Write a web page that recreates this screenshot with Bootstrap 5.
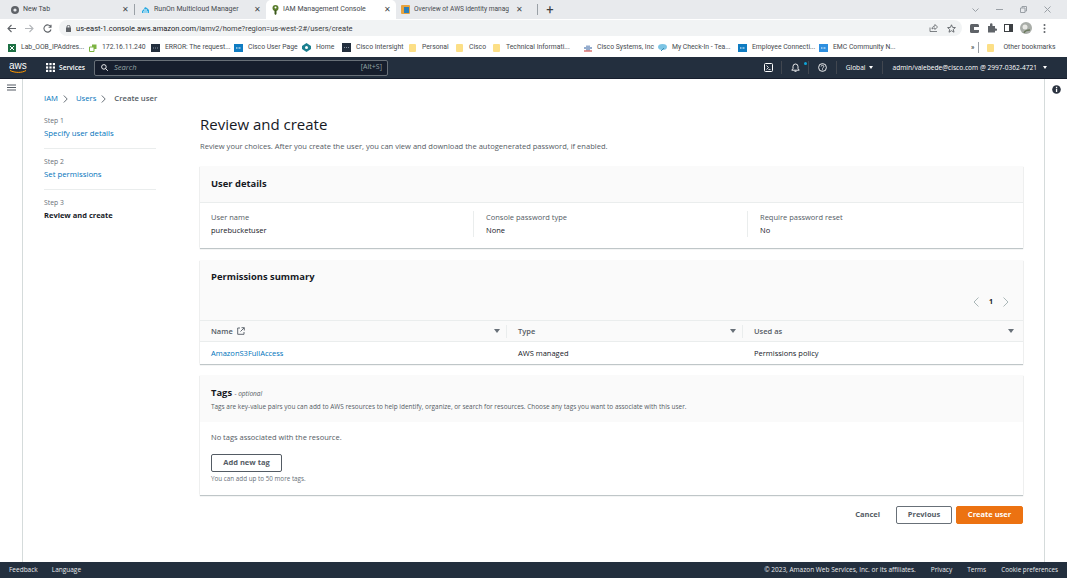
<!DOCTYPE html>
<html lang="en"><head><meta charset="utf-8"><title>IAM Management Console</title>
<link href="https://cdn.jsdelivr.net/npm/bootstrap@5.3.0/dist/css/bootstrap.min.css" rel="stylesheet">
<style>
html,body{height:100%;margin:0;overflow:hidden}
body{width:1067px;height:578px;font-family:"Open Sans","Noto Sans",sans-serif;font-size:7.5px;color:#16191f;background:#fff;line-height:1.2}
a{text-decoration:none;color:#0073bb}
svg{display:block;flex:none}
.tabstrip{height:19px;background:#e8eaed;color:#45494e;font-size:7px;font-family:Roboto,sans-serif}
.ctab{height:19px;gap:4px;flex:none}
.ctab .tname{flex:1;white-space:nowrap;overflow:hidden}
.ctab .tx{font-size:8px;color:#45494e}
.t1{width:134px;padding:0 5px 0 11px}.t2{width:131px;padding:0 5px 0 6px}.t3{width:130px;padding:0 5px 0 6px;background:#fff;border-radius:5px 5px 0 0}.t4{width:141px;padding:0 14px 0 5px}
.t4 .tname{font-size:6.6px}
.tsep{width:1px;height:11px;background:#9aa0a6;flex:none}
.plus{font-size:13px;margin-left:6px;width:12px;color:#3c4043}
.wctl{gap:17px;padding-right:16px;color:#9aa0a6}
.addr{height:18px;background:#fff;padding-left:7px;gap:9px}
.pill{width:903px;height:16px;background:#f1f3f4;border-radius:8px;padding:0 6px 0 7px;font-size:7.5px;color:#3c4043;gap:5px;margin-left:-2px;font-family:Roboto,sans-serif}
.pill b{font-weight:400;color:#202124}
.addr-r{gap:7px;margin-left:-1px}
.bmarks{height:20px;background:#fff;font-size:6.8px;color:#45494e;padding:1px 0 0 8px;white-space:nowrap;font-family:Roboto,sans-serif}
.bm{gap:5px;flex:none}
.b1{width:81px}.b2{width:62px}.b3{width:83px}.b4{width:68px}.b5{width:40px}.b6{width:67px}.b7{width:47px}.b8{width:37px}.b9{width:91px}.b10{width:74px}.b11{width:80px}.b12{width:81px}.b13{width:152px}
.bf{gap:6px}
.awsnav{height:22px;background:#232f3e;color:#fff;border-bottom:1px solid #161e2d;font-size:6.6px;font-weight:500;padding:0 20px 0 9px}
.awslogo{width:20px;margin-right:17px;font-weight:400;font-size:10px;line-height:8px;font-family:"Liberation Sans",sans-serif}
.svc{gap:4px;margin-right:9px;font-weight:600}
.sbox{width:294px;height:16px;background:#161e2d;border:1px solid #687078;border-radius:2px;padding:0 5px 0 6px;color:#95a5a6;font-weight:400}
.sbox i{margin-left:6px;margin-right:auto;font-size:7.6px}
.sbox span{font-size:7px}
.navr{margin-left:auto;gap:0}
.navcell{padding:0 9px;height:13px;gap:4px;border-left:1px solid #414750}
.navcell.first{border-left:0;padding-right:8px}
.navcell.bellc{padding-right:8px}
.caret{width:0;height:0;border-left:2.500px solid transparent;border-right:2.500px solid transparent;border-top:3px solid #fff;margin-left:2px}
.navcell.globc .caret{margin-left:0}
.dotb{width:3px;height:3px;border-radius:50%;background:#0ea5d9;margin:-8px -7px 0 0}
.mainwrap{height:483px}
.rail{width:23px;border-right:1px solid #d5dbdb;flex:none;padding:5px 0 0 7px}
.railr{width:23px;border-left:1px solid #d5dbdb;flex:none;padding:6px 0 0 7px}
.content{flex:1;padding:0 21px 0 21px;min-width:0}
.crumb{height:12px;margin-top:14px;margin-bottom:3px;gap:5px;font-size:7.7px;color:#545b64}
.crumb svg{margin-right:3px}
.crumb span{font-weight:600}
.wiz{width:112px;flex:none;margin-right:44px}
.wstep{height:41px;padding-top:7px;border-bottom:1px solid #eaeded}
.wstep:last-child{border-bottom:0}
.wlabel{font-size:6.8px;color:#687078;height:12px;line-height:12px}
.wlink{font-size:7.8px;height:13px;line-height:13px}
.wcur{font-weight:700;color:#16191f;font-size:7.5px}
.maincol{flex:1;min-width:0;margin-top:5px}
.ptitle{font-size:15px;font-weight:400;margin:0;line-height:22px;height:22px}
.pdesc{font-size:7.55px;color:#545b64;margin:5px 0 14px;line-height:12px;height:12px}
.pcard{border:0;border-radius:0;background:#fff;box-shadow:0 1px 1px 0 rgba(0,28,36,.25),1px 0 1px -1px rgba(0,28,36,.14),-1px 0 1px -1px rgba(0,28,36,.14)}
.phead{background:#fafafa;border:0;border-radius:0;padding:0 11px}
.h1c{height:37px;border-bottom:1px solid #eaeded;display:flex;align-items:center}
.ctitle{font-size:9.4px;font-weight:700;margin:0}
.ud{height:45px;padding:8px 0 0 11px}
.udc{flex:none;height:26px}
.ua{width:262px}
.ub{width:274px;padding-left:12px;border-left:1px solid #eaeded}
.uc{width:262px;padding-left:12px;border-left:1px solid #eaeded}
.udl{font-size:7.5px;color:#545b64;line-height:13px}
.udv{font-size:7.5px;line-height:13px;color:#16191f}
.mt12{margin-top:12px}
.mt11{margin-top:11px}
.permh{height:60px;padding-top:11px}
.pager{gap:10px;justify-content:flex-end;height:14px;margin-top:13px;padding-right:3px;font-weight:700;font-size:7px}
.ptable{table-layout:fixed;width:100%;margin:0;border-collapse:separate;border-spacing:0}
.ptable th,.ptable td{padding:0;border:0;font-size:7.5px;vertical-align:middle}
.ptable th{height:22px;background:#fafafa;border-top:1px solid #eaeded;border-bottom:1px solid #eaeded;color:#545b64;font-weight:600;padding-left:11px}
.ptable td{height:22px;padding-left:11px;background:#fff;color:#16191f}
.c1{width:307px}.c2{width:236px}
.thwrap{height:13px;padding-right:9px}
.thwrap.sep{border-right:1px solid #eaeded;padding-right:6px}
.tri{width:0;height:0;border-left:3px solid transparent;border-right:3px solid transparent;border-top:4px solid #687078;margin-left:auto}
.tagh{height:47px;padding-top:12px}
.opt{font-weight:400;font-style:italic;font-size:6.5px;color:#545b64}
.tagd{font-size:6.45px;color:#545b64;margin-top:4px;line-height:9px;white-space:nowrap}
.tagb{height:73px;padding:9px 11px 0}
.not{font-size:7.5px;color:#545b64;line-height:13px}
.addbtn{width:71px;height:18px;margin-top:10px;padding:0;border:1px solid #545b64;border-radius:2px;background:#fff;color:#545b64;font-weight:700;font-size:7.5px;line-height:1}
.hint{font-size:6.3px;color:#687078;margin-top:2px;line-height:9px}
.acts{margin-top:11px;gap:4px;height:18px}
.cancel{color:#545b64;font-weight:700;font-size:7.5px;margin-right:12px;padding:0;border:0;background:none;line-height:1}
.prevb{width:56px;height:18px;padding:0;border:1px solid #687078;border-radius:2px;background:#fff;color:#545b64;font-weight:700;font-size:7.5px;line-height:1}
.createb{width:67px;height:18px;padding:0;border:1px solid #ec7211;border-radius:2px;background:#ec7211;color:#fff;font-weight:700;font-size:7.5px;line-height:1}
.foot{height:16px;background:#232f3e;color:#e8eaed;font-size:6.5px;padding:0 9px;font-weight:500}
.foot .fl{gap:14px}
.foot .fr{margin-left:auto;gap:15px}
.foot .ck{font-size:6.3px}
</style></head><body>

<div class="tabstrip d-flex align-items-center">
  <div class="ctab t1 d-flex align-items-center"><svg width="8" height="8" viewBox="0 0 8 8"><circle cx="4" cy="4" r="4" fill="#5f6368"/><circle cx="4" cy="4" r="1.6" fill="#e8eaed"/></svg><span class="tname">New Tab</span><span class="tx">✕</span></div>
  <div class="tsep"></div>
  <div class="ctab t2 d-flex align-items-center"><svg width="9" height="8" viewBox="0 0 9 8"><path d="M1 7h7V4L6 2 4 1 3 3 1 5z" fill="#29a8e0"/><path d="M2 6h5M3 4h3" stroke="#fff"/></svg><span class="tname">RunOn Multicloud Manager</span><span class="tx">✕</span></div>
  <div class="ctab t3 d-flex align-items-center"><svg width="7" height="10" viewBox="0 0 7 10"><circle cx="3.500" cy="3" r="3" fill="#5a7d2c"/><path d="M2.500 5h2v4l-1 1-1-1z" fill="#3c5a1d"/><circle cx="3.500" cy="2.400" r="1" fill="#fff"/></svg><span class="tname">IAM Management Console</span><span class="tx">✕</span></div>
  <div class="ctab t4 d-flex align-items-center"><svg width="9" height="9" viewBox="0 0 9 9"><rect width="9" height="9" rx="1" fill="#e8a33d"/><rect x="3" y="2" width="5" height="6" fill="#2c7fb8"/></svg><span class="tname">Overview of AWS identity manag</span><span class="tx">✕</span></div>
  <div class="tsep"></div>
  <div class="plus text-center">+</div>
  <div class="wctl ms-auto d-flex align-items-center">
    <svg width="7" height="4" viewBox="0 0 7 4"><path d="M.5.5 3.500 3.500 6.500.5" fill="none" stroke="#9aa0a6"/></svg>
    <svg width="7" height="1" viewBox="0 0 7 1"><path d="M0 .5h7" stroke="#9aa0a6"/></svg>
    <svg width="7" height="7" viewBox="0 0 7 7"><path d="M.5 2h4.500v4.500H.5zM2 2V.5h4.500V5H5" fill="none" stroke="#9aa0a6"/></svg>
    <svg width="7" height="7" viewBox="0 0 7 7"><path d="M.5.5l6 6M6.500.5l-6 6" stroke="#9aa0a6"/></svg>
  </div>
</div>

<div class="addr d-flex align-items-center">
  <svg width="9" height="9" viewBox="0 0 9 9"><path d="M9 4.500H1.500M4.500 1 1 4.500 4.500 8" fill="none" stroke="#5f6368" stroke-width="1.100"/></svg>
  <svg width="9" height="9" viewBox="0 0 9 9"><path d="M0 4.500h7.500M4.500 1 8 4.500 4.500 8" fill="none" stroke="#b4b7bb" stroke-width="1.100"/></svg>
  <svg width="9" height="9" viewBox="0 0 9 9"><path d="M7.800 3A3.600 3.600 0 1 0 8 5.500M8 .8V3.200H5.600" fill="none" stroke="#5f6368" stroke-width="1.100"/></svg>
  <div class="pill d-flex align-items-center">
    <svg width="5" height="7" viewBox="0 0 5 7"><rect y="2.500" width="5" height="4.500" rx=".5" fill="#5f6368"/><path d="M1 3V1.800a1.500 1.500 0 0 1 3 0V3" fill="none" stroke="#5f6368"/></svg>
    <span class="me-auto"><b>us-east-1.console.aws.amazon.com</b>/iamv2/home?region=us-west-2#/users/create</span>
    <svg width="9" height="8" viewBox="0 0 9 8"><path d="M1 3.500V7.500H8M3 5c0-2 1.500-3 3-3V.5L8.500 3 6 5.500V4C5 4 4 4.200 3 5z" fill="none" stroke="#5f6368" stroke-width=".8"/></svg>
    <svg class="ms-1" width="9" height="9" viewBox="0 0 9 9"><path d="M4.500.8 5.600 3.400 8.400 3.600 6.300 5.400 7 8.200 4.500 6.700 2 8.200 2.700 5.400.6 3.600 3.400 3.400z" fill="none" stroke="#5f6368" stroke-width=".9"/></svg>
  </div>
  <div class="addr-r d-flex align-items-center">
    <svg width="10" height="9" viewBox="0 0 10 9"><rect width="9" height="9" rx="1.500" fill="#5f6368"/><rect x="4" y="3" width="5" height="3" fill="#fff"/></svg>
    <svg width="10" height="10" viewBox="0 0 10 10"><path d="M1 3h2V1.500a1 1 0 0 1 2.500 0V3H8v2.500h1a1 1 0 0 1 0 2.200H8V9.500H1z" fill="#5f6368"/></svg>
    <svg width="9" height="8" viewBox="0 0 9 8"><rect x=".5" y=".5" width="8" height="7" fill="#fff" stroke="#3c4043"/><rect x="5" width="4" height="8" fill="#3c4043"/></svg>
    <svg width="12" height="12" viewBox="0 0 12 12"><circle cx="6" cy="6" r="6" fill="#a9ada8"/><circle cx="5" cy="5" r="2.500" fill="#e8e8e4"/><path d="M4 11c1-3 4-3 6-3" stroke="#6c7a5e" stroke-width="1.500" fill="none"/></svg>
    <svg class="ms-1" width="3" height="9" viewBox="0 0 3 9"><circle cx="1.500" cy="1" r="1" fill="#5f6368"/><circle cx="1.500" cy="4.500" r="1" fill="#5f6368"/><circle cx="1.500" cy="8" r="1" fill="#5f6368"/></svg>
  </div>
</div>

<div class="bmarks d-flex align-items-center">
  <div class="bm b1 d-flex align-items-center"><svg width="8" height="8" viewBox="0 0 8 8"><rect width="8" height="8" fill="#1d7044"/><path d="M2 2l4 4M6 2 2 6" stroke="#fff"/></svg>Lab_OOB_IPAddres...</div>
  <div class="bm b2 d-flex align-items-center"><svg width="8" height="8" viewBox="0 0 8 8"><path d="M.5 3h4.500v4.500H.5z" fill="#fff" stroke="#7cb342"/><path d="M3 .5h4.500V5H5V3H3z" fill="#7cb342"/></svg>172.16.11.240</div>
  <div class="bm b3 d-flex align-items-center"><svg width="9" height="8" viewBox="0 0 9 8"><rect width="9" height="8" fill="#232f3e"/><path d="M2 4h5" stroke="#8a95a3" stroke-dasharray="1 1"/></svg>ERROR: The request...</div>
  <div class="bm b4 d-flex align-items-center"><svg width="9" height="8" viewBox="0 0 9 8"><rect width="9" height="8" fill="#0f7cc2"/><path d="M2 4h5" stroke="#fff" stroke-dasharray="1 .5"/></svg>Cisco User Page</div>
  <div class="bm b5 d-flex align-items-center"><svg width="9" height="9" viewBox="0 0 9 9"><path d="M4.500 0 9 3v3L4.500 9 0 6V3z" fill="#1a7f8f"/><circle cx="4.500" cy="4.500" r="1.500" fill="#fff"/></svg>Home</div>
  <div class="bm b6 d-flex align-items-center"><svg width="9" height="9" viewBox="0 0 9 9"><rect width="9" height="9" fill="#232f3e"/><path d="M2 4.500h5" stroke="#8a95a3" stroke-dasharray="1 1"/></svg>Cisco Intersight</div>
  <div class="bm bf b7 d-flex align-items-center"><svg width="7" height="8" viewBox="0 0 7 8"><rect width="7" height="8" rx="1" fill="#fcdf86"/></svg><span>Personal</span></div>
  <div class="bm bf b8 d-flex align-items-center"><svg width="7" height="8" viewBox="0 0 7 8"><rect width="7" height="8" rx="1" fill="#fcdf86"/></svg><span>Cisco</span></div>
  <div class="bm bf b9 d-flex align-items-center"><svg width="7" height="8" viewBox="0 0 7 8"><rect width="7" height="8" rx="1" fill="#fcdf86"/></svg><span>Technical Informati...</span></div>
  <div class="bm b10 d-flex align-items-center"><svg width="8" height="8" viewBox="0 0 8 8"><path d="M1 3v2M3 1.500v5M5 1.500v5M7 3v2" stroke="#2a5a9c"/><path d="M0 7h8" stroke="#c9302c"/></svg>Cisco Systems, Inc</div>
  <div class="bm b11 d-flex align-items-center"><svg width="9" height="7" viewBox="0 0 9 7"><ellipse cx="4.500" cy="3" rx="4.500" ry="3" fill="#7cc4e4"/><path d="M3 7l3-3" stroke="#3b8ab0"/></svg>My Check-In - Tea...</div>
  <div class="bm b12 d-flex align-items-center"><svg width="9" height="8" viewBox="0 0 9 8"><rect width="9" height="8" fill="#0f7cc2"/><path d="M2 4h5" stroke="#fff" stroke-dasharray="1 .5"/></svg>Employee Connecti...</div>
  <div class="bm b13 d-flex align-items-center"><svg width="9" height="8" viewBox="0 0 9 8"><rect width="9" height="8" fill="#2d8fe0"/><path d="M2 4h5" stroke="#fff" stroke-dasharray="1 .5"/></svg>EMC Community N...</div>
  <span class="fw-bold">»</span>
  <div class="tsep mx-1"></div>
  <div class="bm d-flex align-items-center ms-1"><svg width="7" height="8" viewBox="0 0 7 8"><rect width="7" height="8" rx="1" fill="#fcdf86"/></svg><span class="ms-1">Other bookmarks</span></div>
</div>

<div class="awsnav d-flex align-items-center">
  <div class="awslogo">aws<svg width="19" height="3" viewBox="0 0 19 3"><path d="M1 .5c5 2.500 12 2.500 16 0" fill="none" stroke="#f90"/></svg></div>
  <div class="svc d-flex align-items-center"><svg width="9" height="9" viewBox="0 0 9 9" fill="#fff"><rect width="2.200" height="2.200"/><rect x="3.400" width="2.200" height="2.200"/><rect x="6.800" width="2.200" height="2.200"/><rect y="3.400" width="2.200" height="2.200"/><rect x="3.400" y="3.400" width="2.200" height="2.200"/><rect x="6.800" y="3.400" width="2.200" height="2.200"/><rect y="6.800" width="2.200" height="2.200"/><rect x="3.400" y="6.800" width="2.200" height="2.200"/><rect x="6.800" y="6.800" width="2.200" height="2.200"/></svg>Services</div>
  <div class="sbox d-flex align-items-center"><svg width="7" height="7" viewBox="0 0 7 7"><circle cx="2.900" cy="2.900" r="2.300" fill="none" stroke="#fff" stroke-width=".9"/><path d="M4.600 4.600 6.800 6.800" stroke="#fff" stroke-width=".9"/></svg><i>Search</i><span>[Alt+S]</span></div>
  <div class="navr d-flex align-items-center">
    <div class="navcell first d-flex align-items-center"><svg width="9" height="9" viewBox="0 0 9 9"><rect x=".5" y=".5" width="8" height="8" rx="1" fill="none" stroke="#fff"/><path d="M2.500 2.500 4.500 4.500 2.500 6.500M4.500 6.500H6.500" fill="none" stroke="#fff" stroke-width=".8"/></svg></div>
    <div class="navcell bellc d-flex align-items-center"><svg width="9" height="9" viewBox="0 0 9 9"><path d="M.8 7.200h7.400L7 5.500V3.500a2.500 2.500 0 0 0-5 0v2zM3.500 8.300h2" fill="none" stroke="#fff" stroke-width=".9"/></svg><span class="dotb"></span></div>
    <div class="navcell d-flex align-items-center"><svg width="9" height="9" viewBox="0 0 9 9"><circle cx="4.500" cy="4.500" r="3.900" fill="none" stroke="#fff" stroke-width=".9"/><path d="M3.200 3.500a1.300 1.300 0 1 1 1.900 1.200c-.5.300-.6.500-.6 1" fill="none" stroke="#fff" stroke-width=".8"/><circle cx="4.500" cy="6.800" r=".5" fill="#fff"/></svg></div>
    <div class="navcell globc d-flex align-items-center">Global<span class="caret"></span></div>
    <div class="navcell d-flex align-items-center pe-0">admin/valebede@cisco.com @ 2997-0362-4721<span class="caret"></span></div>
  </div>
</div>

<div class="mainwrap d-flex">
  <div class="rail"><svg width="9" height="7" viewBox="0 0 9 7"><path d="M0 1h9M0 3.500h9M0 6h9" stroke="#545b64" stroke-width="1.100"/></svg></div>
  <div class="content">
    <div class="crumb d-flex align-items-center"><a href="#">IAM</a><svg width="5" height="8" viewBox="0 0 5 8"><path d="M.8.5 4.200 4 .8 7.500" fill="none" stroke="#687078"/></svg><a href="#">Users</a><svg width="5" height="8" viewBox="0 0 5 8"><path d="M.8.5 4.200 4 .8 7.500" fill="none" stroke="#687078"/></svg><span>Create user</span></div>
    <div class="d-flex">
      <div class="wiz">
        <div class="wstep"><div class="wlabel">Step 1</div><div class="wlink"><a href="#">Specify user details</a></div></div>
        <div class="wstep"><div class="wlabel">Step 2</div><div class="wlink"><a href="#">Set permissions</a></div></div>
        <div class="wstep"><div class="wlabel">Step 3</div><div class="wlink wcur">Review and create</div></div>
      </div>
      <div class="maincol">
        <h1 class="ptitle">Review and create</h1>
        <p class="pdesc">Review your choices. After you create the user, you can view and download the autogenerated password, if enabled.</p>

        <div class="card pcard">
          <div class="phead h1c"><h2 class="ctitle">User details</h2></div>
          <div class="ud d-flex">
            <div class="udc ua"><div class="udl">User name</div><div class="udv">purebucketuser</div></div>
            <div class="udc ub"><div class="udl">Console password type</div><div class="udv">None</div></div>
            <div class="udc uc"><div class="udl">Require password reset</div><div class="udv">No</div></div>
          </div>
        </div>

        <div class="card pcard mt12">
          <div class="phead permh">
            <h2 class="ctitle">Permissions summary</h2>
            <div class="pager d-flex align-items-center">
              <svg width="6" height="10" viewBox="0 0 6 10"><path d="M5.500.5 1 5l4.500 4.500" fill="none" stroke="#aab7b8"/></svg><span>1</span>
              <svg width="6" height="10" viewBox="0 0 6 10"><path d="M.5.5 5 5 .5 9.500" fill="none" stroke="#aab7b8"/></svg>
            </div>
          </div>
          <table class="ptable">
            <colgroup><col class="c1"><col class="c2"><col></colgroup>
            <thead><tr>
              <th><div class="thwrap sep d-flex align-items-center">Name<svg class="ms-1" width="8" height="8" viewBox="0 0 8 8"><path d="M3 1H.7v6.300H7V5M4.500.7h2.800v2.800M7.200.8 3.500 4.500" fill="none" stroke="#545b64" stroke-width=".9"/></svg><span class="tri"></span></div></th>
              <th><div class="thwrap sep d-flex align-items-center">Type<span class="tri"></span></div></th>
              <th><div class="thwrap d-flex align-items-center">Used as<span class="tri"></span></div></th>
            </tr></thead>
            <tbody><tr><td><a href="#">AmazonS3FullAccess</a></td><td>AWS managed</td><td>Permissions policy</td></tr></tbody>
          </table>
        </div>

        <div class="card pcard mt11">
          <div class="phead tagh">
            <h2 class="ctitle">Tags <span class="opt">- optional</span></h2>
            <div class="tagd">Tags are key-value pairs you can add to AWS resources to help identify, organize, or search for resources. Choose any tags you want to associate with this user.</div>
          </div>
          <div class="tagb">
            <div class="not">No tags associated with the resource.</div>
            <button class="btn addbtn" type="button">Add new tag</button>
            <div class="hint">You can add up to 50 more tags.</div>
          </div>
        </div>

        <div class="acts d-flex justify-content-end align-items-center">
          <button class="btn cancel" type="button">Cancel</button>
          <button class="btn prevb" type="button">Previous</button>
          <button class="btn createb" type="button">Create user</button>
        </div>
      </div>
    </div>
  </div>
  <div class="railr"><svg width="9" height="9" viewBox="0 0 9 9"><circle cx="4.500" cy="4.500" r="4.300" fill="#2b3340"/><rect x="3.900" y="3.800" width="1.300" height="3.200" fill="#fff"/><rect x="3.900" y="1.800" width="1.300" height="1.300" fill="#fff"/></svg></div>
</div>

<div class="foot d-flex align-items-center">
  <div class="fl d-flex"><span>Feedback</span><span>Language</span></div>
  <div class="fr d-flex"><span>© 2023, Amazon Web Services, Inc. or its affiliates.</span><span>Privacy</span><span>Terms</span><span class="ck">Cookie preferences</span></div>
</div>
<script src="https://cdn.jsdelivr.net/npm/bootstrap@5.3.0/dist/js/bootstrap.bundle.min.js"></script>
</body></html>
